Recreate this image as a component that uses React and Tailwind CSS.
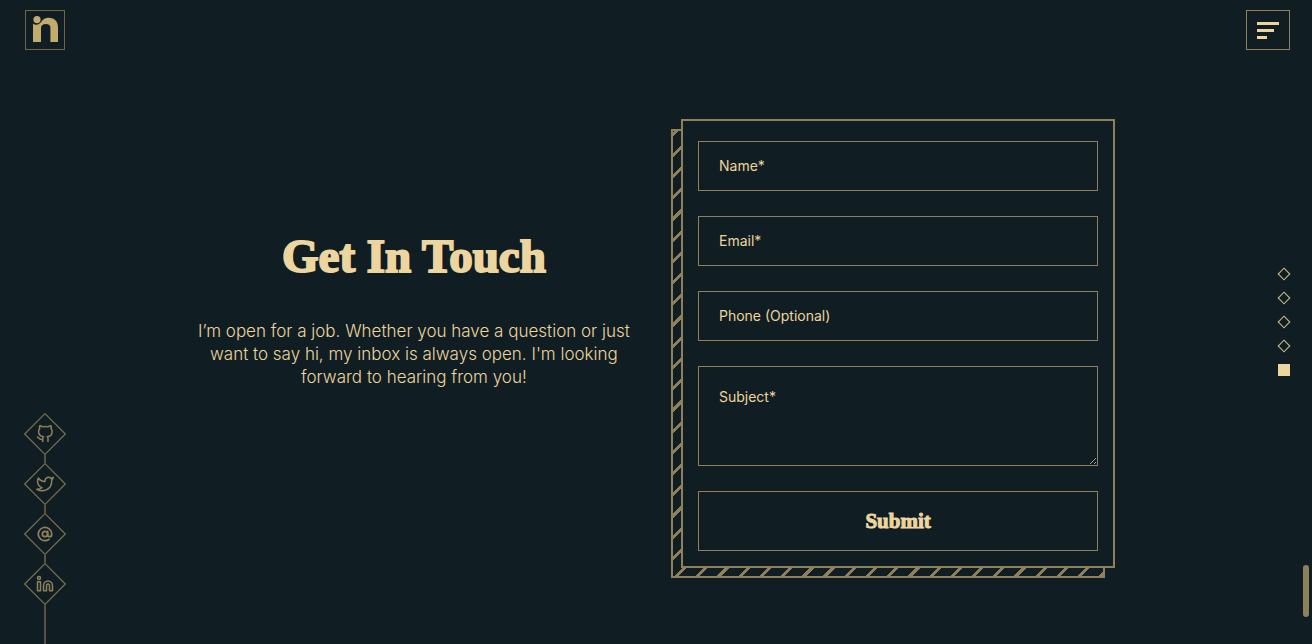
import { FiGithub, FiTwitter, FiAtSign, FiLinkedin } from "react-icons/fi";

const socials = [
  { label: "GitHub", Icon: FiGithub, size: 18, stroke: 2 },
  { label: "Twitter", Icon: FiTwitter, size: 18, stroke: 2 },
  { label: "Email", Icon: FiAtSign, size: 16, stroke: 2.6 },
  { label: "LinkedIn", Icon: FiLinkedin, size: 18, stroke: 2 },
];

const sections = ["Home", "About", "Skills", "Projects", "Contact"];

const fieldClass =
  "block h-[50px] w-full border border-[#8f805c] bg-transparent px-5 pb-[2px] text-sm text-[#ecd59f] outline-none placeholder:text-[#ecd59f]";

function Header() {
  return (
    <header className="flex items-start justify-between pt-[10px] pr-[22px] pl-[25px]">
      <a href="#home" aria-label="Home" className="block size-10 border border-[#6e6446]">
        <svg viewBox="0 0 38 38" className="size-full" fill="#c2ab6e">
          <circle cx="11" cy="8.6" r="3.6" />
          <path d="M7 31V12.4C9 14.4 13 14.4 15.3 10.8C17 8 19.4 6.8 22.6 6.8C28.8 6.8 32 10.6 32 16.4V31H24.4V16.6C24.4 14.2 22.8 13 19.9 13C17 13 15 14.4 15 17.2V31Z" />
        </svg>
      </a>
      <button type="button" aria-label="Menu" className="flex h-10 w-11 flex-col justify-center gap-1 border border-[#8f805c] pl-[10px]">
        <span className="h-[3px] w-[22px] bg-[#ecd59f]" />
        <span className="h-[3px] w-[17px] bg-[#ecd59f]" />
        <span className="h-[3px] w-[10px] bg-[#ecd59f]" />
      </button>
    </header>
  );
}

function SocialRail() {
  return (
    <nav aria-label="Social links" className="fixed bottom-0 left-6 flex w-[42px] flex-col items-center">
      {socials.map(({ label, Icon, size, stroke }) => (
        <div key={label} className="flex flex-col items-center">
          <a href="#contact" aria-label={label} className="relative block size-[42px] text-[#8f805c]">
            <svg viewBox="0 0 42 42" className="size-full" fill="none" stroke="#776e50">
              <path d="M21 .7 41.3 21 21 41.3 .7 21Z" strokeWidth="1.2" />
            </svg>
            <span className="absolute inset-0 flex items-center justify-center">
              <Icon size={size} strokeWidth={stroke} />
            </span>
          </a>
          <span className={label === "LinkedIn" ? "h-[39px] w-[2px] bg-[#5a543e]" : "h-2 w-[2px] bg-[#5a543e]"} />
        </div>
      ))}
    </nav>
  );
}

function SectionDots() {
  return (
    <nav aria-label="Sections" className="fixed top-1/2 right-[22px] flex -translate-y-1/2 flex-col gap-3">
      {sections.map((name) => (
        <a key={name} href="#contact" aria-label={name} className="block size-3">
          <svg viewBox="0 0 12 12" className="size-full overflow-visible">
            {name === "Contact" ? (
              <path d="M0 0H12V12H0Z" fill="#ecd59f" />
            ) : (
              <path d="M6 .2 11.8 6 6 11.8 .2 6Z" fill="none" stroke="#c4b386" strokeWidth="1.1" />
            )}
          </svg>
        </a>
      ))}
    </nav>
  );
}

function ContactForm() {
  return (
    <div className="relative isolate">
      <div className="absolute top-[10px] right-[10px] -bottom-[10px] -left-[10px] -z-10 border-2 border-[#8f805c] bg-[repeating-linear-gradient(-45deg,#8f805c_0px,#8f805c_3px,transparent_3px,transparent_15px)]" />
      <form
        className="flex flex-col gap-[25px] border-2 border-[#8f805c] bg-[#101e23] px-[15px] pt-5 pb-[15px]"
        onSubmit={(event) => event.preventDefault()}
      >
        <input aria-label="Name" type="text" placeholder="Name*" className={fieldClass} />
        <input aria-label="Email" type="email" placeholder="Email*" className={fieldClass} />
        <input aria-label="Phone" type="tel" placeholder="Phone (Optional)" className={fieldClass} />
        <textarea
          aria-label="Subject"
          placeholder="Subject*"
          className="block h-[100px] w-full resize border border-[#8f805c] bg-transparent p-5 text-sm text-[#ecd59f] outline-none placeholder:text-[#ecd59f]"
        />
        <button type="submit" className="h-[60px] border border-[#8f805c] pt-[2px] font-['Liberation_Serif',serif] text-[21px] font-bold text-[#ecd59f] [-webkit-text-stroke:1px_#ecd59f]">
          Submit
        </button>
      </form>
    </div>
  );
}

export default function App() {
  return (
    <div className="min-h-screen bg-[#101e23] font-[Inter,sans-serif] text-[#ecd59f]">
      <Header />
      <main id="contact" className="mx-auto grid w-[70%] grid-cols-2 items-center gap-[50px] pt-[69px] pb-[66px]">
        <section className="-mx-2 pb-[73px] text-center">
          <h1 className="font-['Liberation_Serif',serif] text-[47px] leading-[60px] font-bold whitespace-nowrap [-webkit-text-stroke:2px_#ecd59f]">
            Get In Touch
          </h1>
          <p className="mt-[34px] text-[17px] leading-[23px] font-light">
            I’m open for a job. Whether you have a question or just want to say hi, my inbox is always open. I'm looking
            forward to hearing from you!
          </p>
        </section>
        <ContactForm />
      </main>
      <SocialRail />
      <SectionDots />
      <div className="fixed right-[3px] bottom-[27px] h-[52px] w-[6px] rounded-full bg-[#8f805c]" />
    </div>
  );
}
